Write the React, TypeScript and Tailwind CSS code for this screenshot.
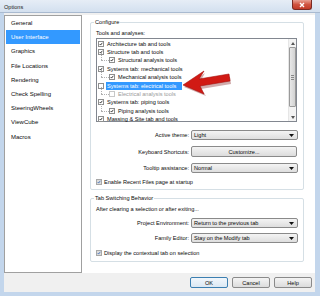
import React from 'react';

const Check = ({ color = '#000' }: { color?: string }) => (
  <svg width="6" height="6" viewBox="0 0 6 6" className="block">
    <path d="M1 3 L2.4 4.6 L5 1.2" fill="none" stroke={color} strokeWidth="1.1" />
  </svg>
);

const Box = ({ checked, dis, gray }: { checked: boolean; dis?: boolean; gray?: boolean }) => (
  <div
    className={
      'w-[6px] h-[6px] shrink-0 border flex items-center justify-center ' +
      (gray ? 'bg-[#dcdcdc] border-[#a8a8a8]' : dis ? 'bg-white border-[#c8c8c8]' : 'bg-white border-[#8e8f8f]')
    }
  >
    {checked && <Check color={gray ? '#2a62b8' : '#000'} />}
  </div>
);

const Arrow = () => (
  <svg width="5" height="3" viewBox="0 0 5 3" className="block">
    <path d="M0 0 L5 0 L2.5 3 Z" fill="#111" />
  </svg>
);

const Select = ({ text }: { text: string }) => (
  <div className="ml-[2px] w-[107px] h-[10px] border border-[#8a8a8a] rounded-[2px] bg-gradient-to-b from-[#f4f4f4] to-[#dedede] flex items-center pl-[2px] pr-[3px]">
    <span className="flex-1 text-[5.6px] leading-[8px]">{text}</span>
    <Arrow />
  </div>
);

const rows = [
  { l: 0, c: true, t: 'Architecture tab and tools' },
  { l: 0, c: true, t: 'Structure tab and tools' },
  { l: 1, c: true, t: 'Structural analysis tools' },
  { l: 0, c: true, t: 'Systems tab: mechanical tools' },
  { l: 1, c: true, t: 'Mechanical analysis tools' },
  { l: 0, c: false, t: 'Systems tab: electrical tools', sel: true },
  { l: 1, c: false, t: 'Electrical analysis tools', dis: true },
  { l: 0, c: true, t: 'Systems tab: piping tools' },
  { l: 1, c: true, t: 'Piping analysis tools' },
  { l: 0, c: true, t: 'Massing & Site tab and tools' },
];

const left = ['General', 'User Interface', 'Graphics', 'File Locations', 'Rendering', 'Check Spelling', 'SteeringWheels', 'ViewCube', 'Macros'];

export default function App() {
  return (
    <div className="relative w-[320px] h-[296px] overflow-hidden bg-[#c3d6ec] font-['Liberation_Sans',Arial,sans-serif] text-[#0a0a0a]">
      {/* title bar */}
      <div className="h-[13px] flex items-start bg-gradient-to-b from-[#e6edf6] to-[#d3e0ef] border-b border-[#a9bad0]">
        <span className="pl-[4px] pt-[3px] text-[5.6px] leading-[8px] text-[#222]">Options</span>
        <div className="ml-auto mr-[8px] w-[20px] h-[10px] rounded-b-[3px] border border-t-0 border-[#7a2a22] bg-gradient-to-b from-[#e8a093] via-[#d0533f] to-[#c23a27] flex items-center justify-center">
          <svg width="6" height="6" viewBox="0 0 6 6">
            <path d="M1 1 L5 5 M5 1 L1 5" stroke="#fff" strokeWidth="1.4" />
          </svg>
        </div>
      </div>
      {/* client */}
      <div className="ml-[4px] w-[311px] h-[279px] bg-[#f0f0f0] flex flex-col">
        <div className="mt-[2px] h-[258px] bg-white flex">
          {/* left list */}
          <div className="w-[78px] h-full border border-[#a0a0a0] pt-0">
            {left.map((t) => (
              <div
                key={t}
                className={
                  'h-[14.2px] mx-[1px] pl-[5px] flex items-center text-[6px] leading-[8px] ' +
                  (t === 'User Interface' ? 'bg-[#3399ff] text-white' : '')
                }
              >
                {t}
              </div>
            ))}
          </div>
          {/* right pane */}
          <div className="flex-1 pl-[8px]">
            {/* Configure group */}
            <div className="relative mt-[7px] w-[214px] h-[168px] border border-[#d5dfe5] rounded-[2px]">
              <span className="absolute -top-[5px] left-[3px] px-[1px] bg-white text-[5.6px] leading-[8px]">Configure</span>
              <div className="mt-[6px] h-[8px] pl-[5px] text-[5.6px] leading-[8px]">Tools and analyses:</div>
              <div className="mt-[1px] ml-[5px] w-[201px] h-[84px] border border-[#828790] flex">
                <div className="flex-1 pt-[0.5px]">
                  {rows.map((r, i) => (
                    <div key={i} className="relative h-[8.4px] flex items-center">
                      {r.l === 1 && (
                        <>
                          <span className="absolute left-[4px] top-[-3px] h-[7px] border-l border-dotted border-[#b0b0b0]" />
                          <span className="absolute left-[4px] top-[4px] w-[8px] border-t border-dotted border-[#b0b0b0]" />
                        </>
                      )}
                      <div className={r.l === 1 ? 'ml-[12px]' : 'ml-[1px]'}>
                        <Box checked={r.c} dis={r.dis} />
                      </div>
                      <span
                        className={
                          'ml-[2px] px-[1px] text-[5.6px] leading-[8px] whitespace-nowrap ' +
                          (r.sel ? 'bg-[#3399ff] text-white pr-[6px]' : r.dis ? 'text-[#9a9a9a]' : '')
                        }
                      >
                        {r.t}
                      </span>
                    </div>
                  ))}
                </div>
                {/* scrollbar */}
                <div className="w-[8px] h-full bg-[#f3f3f3] border-l border-[#e6e6e6] flex flex-col items-center">
                  <div className="h-[8px] flex items-center justify-center">
                    <svg width="4" height="3" viewBox="0 0 4 3"><path d="M0 3 L4 3 L2 0 Z" fill="#555" /></svg>
                  </div>
                  <div className="w-[7px] h-[60px] border border-[#9a9a9a] rounded-[1px] bg-gradient-to-r from-[#e8e8e8] to-[#d2d2d2] flex flex-col items-center justify-center gap-[1px]">
                    <span className="w-[3px] h-px bg-[#888]" />
                    <span className="w-[3px] h-px bg-[#888]" />
                    <span className="w-[3px] h-px bg-[#888]" />
                  </div>
                  <div className="mt-auto h-[8px] flex items-center justify-center">
                    <svg width="4" height="3" viewBox="0 0 4 3"><path d="M0 0 L4 0 L2 3 Z" fill="#555" /></svg>
                  </div>
                </div>
              </div>
              <div className="mt-[8px] h-[10px] flex items-center">
                <span className="w-[98px] text-right text-[5.6px] leading-[8px]">Active theme:</span>
                <Select text="Light" />
              </div>
              <div className="mt-[6px] h-[11px] flex items-center">
                <span className="w-[98px] text-right text-[5.6px] leading-[8px]">Keyboard Shortcuts:</span>
                <div className="ml-[2px] w-[106px] h-[11px] border border-[#8a8a8a] rounded-[2px] bg-gradient-to-b from-[#f4f4f4] to-[#dcdcdc] flex items-center justify-center text-[5.6px] leading-[8px]">
                  Customize...
                </div>
              </div>
              <div className="mt-[6px] h-[10px] flex items-center">
                <span className="w-[98px] text-right text-[5.6px] leading-[8px]">Tooltip assistance:</span>
                <Select text="Normal" />
              </div>
              <div className="mt-[5px] h-[8px] pl-[5px] flex items-center">
                <Box checked gray />
                <span className="ml-[2px] text-[5.6px] leading-[8px] whitespace-nowrap">Enable Recent Files page at startup</span>
              </div>
            </div>
            {/* Tab switching group */}
            <div className="relative mt-[8px] w-[214px] h-[64px] border border-[#d5dfe5] rounded-[2px]">
              <span className="absolute -top-[5px] left-[3px] px-[1px] bg-white text-[5.6px] leading-[8px]">Tab Switching Behavior</span>
              <div className="mt-[6px] h-[8px] pl-[5px] text-[5.6px] leading-[8px]">After clearing a selection or after exiting...</div>
              <div className="mt-[5px] h-[10px] flex items-center">
                <span className="w-[98px] text-right text-[5.6px] leading-[8px]">Project Environment:</span>
                <Select text="Return to the previous tab" />
              </div>
              <div className="mt-[5px] h-[10px] flex items-center">
                <span className="w-[98px] text-right text-[5.6px] leading-[8px]">Family Editor:</span>
                <Select text="Stay on the Modify tab" />
              </div>
              <div className="mt-[6px] h-[8px] pl-[5px] flex items-center">
                <Box checked gray />
                <span className="ml-[2px] text-[5.6px] leading-[8px] whitespace-nowrap">Display the contextual tab on selection</span>
              </div>
            </div>
          </div>
        </div>
        {/* buttons */}
        <div className="mt-[4px] flex justify-end gap-[4px] pr-[3px]">
          <div className="w-[38px] h-[11px] border border-[#3c7fb1] rounded-[2px] bg-gradient-to-b from-[#f2f7fc] to-[#dbe8f3] flex items-center justify-center text-[5.6px] leading-[8px]">OK</div>
          <div className="w-[38px] h-[11px] border border-[#8a8a8a] rounded-[2px] bg-gradient-to-b from-[#f4f4f4] to-[#dcdcdc] flex items-center justify-center text-[5.6px] leading-[8px]">Cancel</div>
          <div className="w-[38px] h-[11px] border border-[#8a8a8a] rounded-[2px] bg-gradient-to-b from-[#f4f4f4] to-[#dcdcdc] flex items-center justify-center text-[5.6px] leading-[8px]">Help</div>
        </div>
      </div>
      {/* red arrow overlay */}
      <svg className="absolute left-0 top-0" width="320" height="296" viewBox="0 0 320 296">
        <polygon points="184,87 205,73 200,82 230,77 231,84 201,89 206,96" fill="#7a1010" opacity="0.35" />
        <polygon points="183,85 204,71 199,79 229,74 230,81 200,86 204,94" fill="#d11a14" stroke="#a50d0a" strokeWidth="0.6" />
      </svg>
    </div>
  );
}
